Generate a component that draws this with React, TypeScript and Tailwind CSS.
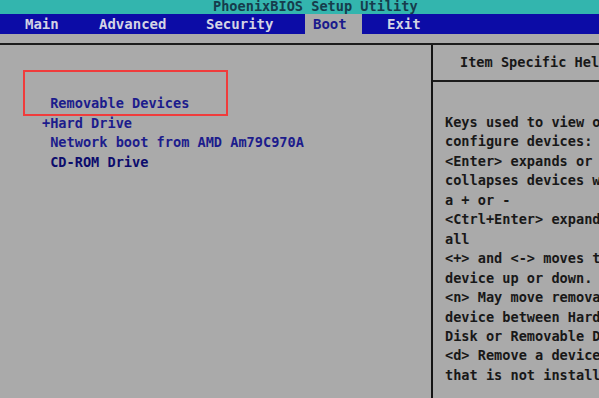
import React from 'react';

const bootItems = [
  { label: ' Removable Devices', strong: false },
  { label: '+Hard Drive', strong: false },
  { label: ' Network boot from AMD Am79C970A', strong: false },
  { label: ' CD-ROM Drive', strong: true },
];

const helpLines = [
  'Keys used to view or',
  'configure devices:',
  '<Enter> expands or',
  'collapses devices with',
  'a + or -',
  '<Ctrl+Enter> expands',
  'all',
  '<+> and <-> moves the',
  'device up or down.',
  '<n> May move removable',
  'device between Hard',
  'Disk or Removable Disk',
  '<d> Remove a device',
  'that is not installed.',
];

export default function App() {
  return (
    <div
      className="relative flex h-[398px] w-[599px] flex-col overflow-hidden bg-[#aaaaaa] text-[13.6px] font-bold whitespace-pre"
      style={{ fontFamily: '"DejaVu Sans Mono", "Liberation Mono", monospace' }}
    >
      {/* title bar */}
      <div className="flex h-[14px] items-center bg-[#33b5ae] pl-[213px] leading-[14px] text-[#163c4c]">
        <span className="-mt-[3px]">PhoenixBIOS Setup Utility</span>
      </div>

      {/* menu bar */}
      <div className="flex h-[20px] items-center bg-[#0c0ca6] pl-[25px] text-[14px] leading-[20px] text-[#d4d4e4]">
        <span className="w-[74px]">Main</span>
        <span className="w-[107px]">Advanced</span>
        <span className="w-[99px]">Security</span>
        <span className="h-full w-[57px] bg-[#aaaaaa] pl-[8px] text-[#1a1a8c]">Boot</span>
        <span className="ml-[25px]">Exit</span>
      </div>

      <div className="h-[9px]" />

      <div className="flex flex-1 border-t-2 border-[#1c1c1c]">
        {/* left panel */}
        <div className="relative w-[433px] shrink-0 border-r-2 border-[#141414] pt-[49px] pl-[42px] leading-[19.5px] text-[#1c1c8c]">
          {bootItems.map((item) => (
            <div key={item.label} className={item.strong ? 'text-[#0c0c6c]' : ''}>
              {item.label}
            </div>
          ))}
          <div className="absolute left-[23px] top-[25px] h-[46px] w-[205px] border-2 border-[#f03c3c]" />
        </div>

        {/* right panel */}
        <div className="flex min-w-0 flex-1 flex-col text-[#181818]">
          <div className="flex h-[37px] items-center border-b-2 border-[#1c1c1c] pl-[27px]">
            Item Specific Help
          </div>
          <div className="pt-[31px] pl-[12px] leading-[19.45px]">
            {helpLines.map((line, i) => (
              <div key={i}>{line}</div>
            ))}
          </div>
        </div>
      </div>
    </div>
  );
}
